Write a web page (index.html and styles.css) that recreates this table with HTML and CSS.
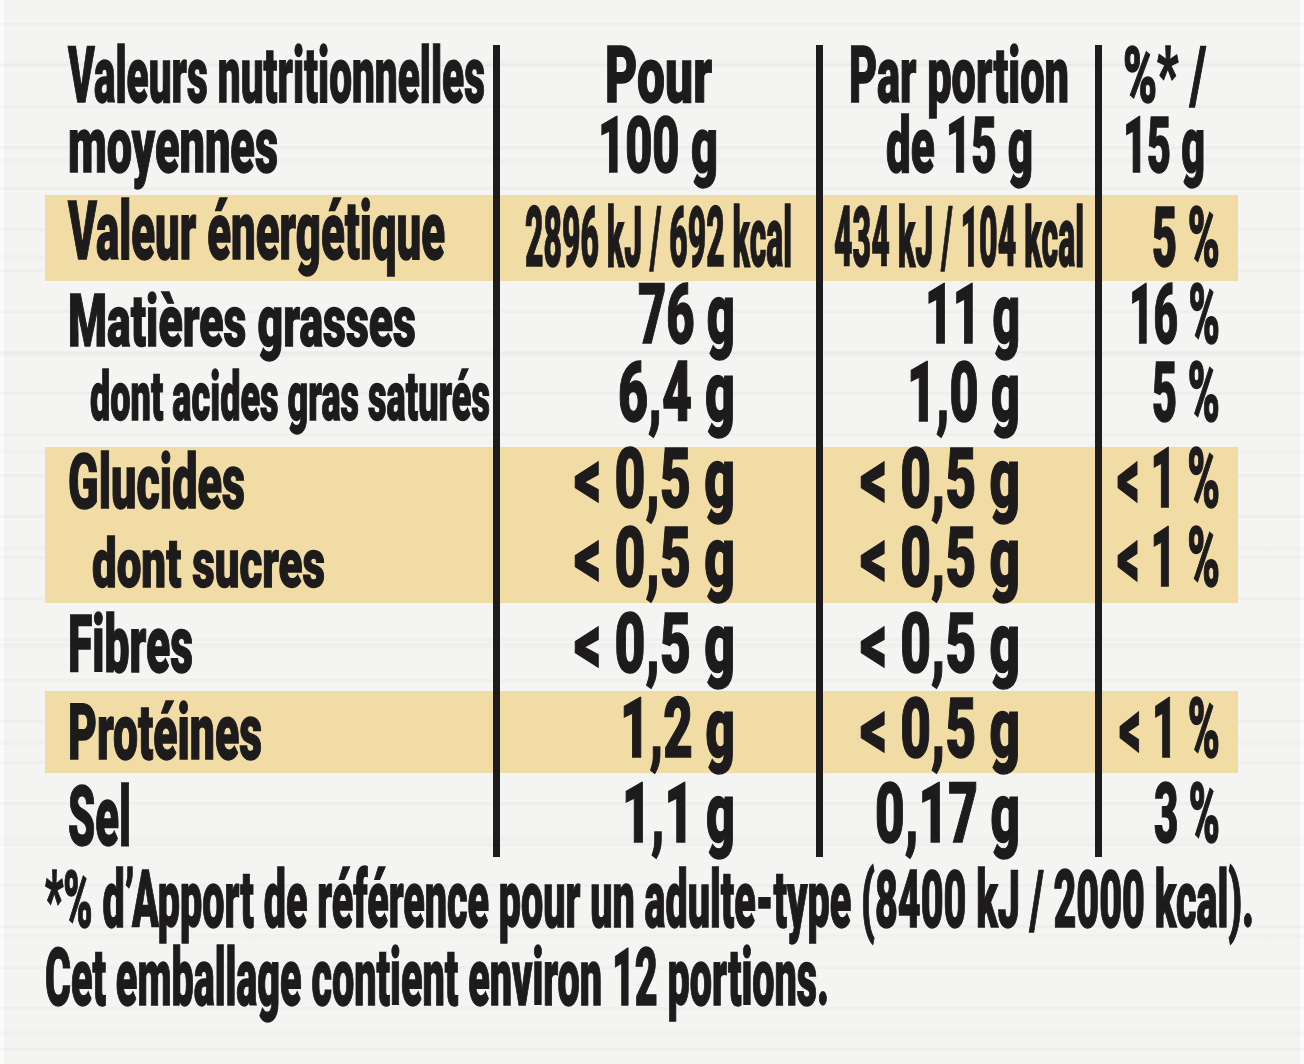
FILE: index.html
```html
<!DOCTYPE html>
<html lang="fr">
<head>
<meta charset="utf-8">
<title>Valeurs nutritionnelles</title>
<link rel="stylesheet" href="styles.css">
</head>
<body>
<div class="sheet">
  <div class="table">
    <div class="row hdr">
      <div class="cell c1 lab"><span class="fit" data-w="417">Valeurs nutritionnelles</span><span class="fit" data-w="210">moyennes</span></div>
      <div class="cell c2 ctr"><span class="fit" data-w="107">Pour</span><span class="fit" data-w="120">100 g</span></div>
      <div class="cell c3 ctr"><span class="fit" data-w="220">Par portion</span><span class="fit" data-w="147">de 15 g</span></div>
      <div class="cell c4 lft"><span class="fit" data-w="83">%* /</span><span class="fit" data-w="82">15 g</span></div>
    </div>
    <div class="row band r-energy">
      <div class="cell c1 lab"><span class="fit" data-w="377">Valeur énergétique</span></div>
      <div class="cell c2 ctr"><span class="fit" data-w="267">2896 kJ / 692 kcal</span></div>
      <div class="cell c3 ctr"><span class="fit" data-w="250">434 kJ / 104 kcal</span></div>
      <div class="cell c4 val"><span class="fit" data-w="68">5 %</span></div>
    </div>
    <div class="row r-fat">
      <div class="cell c1 lab"><span class="fit" data-w="348">Matières grasses</span></div>
      <div class="cell c2 val"><span class="fit" data-w="97">76 g</span></div>
      <div class="cell c3 val"><span class="fit" data-w="95">11 g</span></div>
      <div class="cell c4 val"><span class="fit" data-w="91">16 %</span></div>
    </div>
    <div class="row r-sat">
      <div class="cell c1 lab sub1"><span class="fit" data-w="400">dont acides gras saturés</span></div>
      <div class="cell c2 val"><span class="fit" data-w="117">6,4 g</span></div>
      <div class="cell c3 val"><span class="fit" data-w="113">1,0 g</span></div>
      <div class="cell c4 val"><span class="fit" data-w="68">5 %</span></div>
    </div>
    <div class="row band r-gluc">
      <div class="cell c1 lab"><span class="fit" data-w="177">Glucides</span></div>
      <div class="cell c2 val"><span class="fit" data-w="161">&lt; 0,5 g</span></div>
      <div class="cell c3 val"><span class="fit" data-w="160">&lt; 0,5 g</span></div>
      <div class="cell c4 val"><span class="fit" data-w="103">&lt; 1 %</span></div>
    </div>
    <div class="row band r-sucres">
      <div class="cell c1 lab sub2"><span class="fit" data-w="233">dont sucres</span></div>
      <div class="cell c2 val"><span class="fit" data-w="161">&lt; 0,5 g</span></div>
      <div class="cell c3 val"><span class="fit" data-w="160">&lt; 0,5 g</span></div>
      <div class="cell c4 val"><span class="fit" data-w="103">&lt; 1 %</span></div>
    </div>
    <div class="row r-fibres">
      <div class="cell c1 lab"><span class="fit" data-w="125">Fibres</span></div>
      <div class="cell c2 val"><span class="fit" data-w="161">&lt; 0,5 g</span></div>
      <div class="cell c3 val"><span class="fit" data-w="160">&lt; 0,5 g</span></div>
      <div class="cell c4 val"></div>
    </div>
    <div class="row band r-prot">
      <div class="cell c1 lab"><span class="fit" data-w="194">Protéines</span></div>
      <div class="cell c2 val"><span class="fit" data-w="115">1,2 g</span></div>
      <div class="cell c3 val"><span class="fit" data-w="160">&lt; 0,5 g</span></div>
      <div class="cell c4 val"><span class="fit" data-w="101">&lt; 1 %</span></div>
    </div>
    <div class="row r-sel">
      <div class="cell c1 lab"><span class="fit" data-w="63">Sel</span></div>
      <div class="cell c2 val"><span class="fit" data-w="113">1,1 g</span></div>
      <div class="cell c3 val"><span class="fit" data-w="145">0,17 g</span></div>
      <div class="cell c4 val"><span class="fit" data-w="66">3 %</span></div>
    </div>
  </div>
  <div class="notes">
    <span class="fit" data-w="1209">*% d’Apport de référence pour un adulte-type (8400 kJ / 2000 kcal).</span>
    <span class="fit" data-w="784">Cet emballage contient environ 12 portions.</span>
  </div>
</div>
<script src="script.js"></script>
</body>
</html>
```
FILE: styles.css
```css
html, body {
  margin: 0;
  padding: 0;
  overflow: hidden;
}

body {
  width: 1304px;
  height: 1064px;
  background-color: #f4f4f3;
  background-image:
    repeating-linear-gradient(180deg, rgba(0,0,0,0) 0 23px, rgba(90,90,90,0.035) 23px 26px, rgba(0,0,0,0) 26px 41px),
    repeating-linear-gradient(180deg, rgba(0,0,0,0) 0 61px, rgba(120,120,120,0.03) 61px 66px, rgba(0,0,0,0) 66px 97px),
    linear-gradient(90deg, rgba(255,255,255,0.6) 0 4px, rgba(255,255,255,0) 4px calc(100% - 4px), rgba(255,255,255,0.6) calc(100% - 4px));
  font-family: "Roboto", "Liberation Sans", Arial, sans-serif;
  font-weight: 900;
  color: #1d1b1b;
}

.sheet {
  padding: 45px 0 0 45px;
}

.table {
  width: 1193px;
}

.row {
  display: grid;
  grid-template-columns: 455px 323px 279px 136px;
  --lf: 80px;
  --lp: 0px;
  --vp: 0px;
}

.band {
  background: #f2dca6;
}

.cell {
  box-sizing: border-box;
  display: flex;
  flex-direction: column;
}

.c1, .c2, .c3 {
  border-right: 7px solid #1d1b1b;
}

.fit {
  display: block;
  flex: none;
  white-space: nowrap;
  line-height: 0.8;
  font-size: 83px;
  -webkit-text-stroke: 1.4px #1d1b1b;
  transform-origin: left center;
  transform: scaleX(0.5);
}

.lab { align-items: flex-start; padding-left: 23px; }
.lab .fit { font-size: var(--lf); }
.lab > .fit:first-child { margin-top: var(--lp); }

.sub1 { padding-left: 45px; }
.sub2 { padding-left: 47px; }

.ctr { align-items: center; }
.lft { align-items: flex-start; padding-left: 21px; }

.val { align-items: flex-end; }
.c2.val { padding-right: 81px; }
.c3.val { padding-right: 75px; }
.c4.val { padding-right: 18px; }

.val > .fit:first-child,
.ctr > .fit:first-child { margin-top: var(--vp); }

/* header */
.hdr { height: 150px; }
.hdr .fit {
  font-size: 78px;
  line-height: 70px;
}
.hdr .cell > .fit:first-child { margin-top: -4px; }

/* rows */
.r-energy { height: 86px; --lf: 82px; --lp: 4px; --vp: 10px; }
.r-fat    { height: 81px; --lf: 72px; --lp: 12px; --vp: 1px; }
.r-sat    { height: 85px; --lf: 68px; --lp: 8px;  --vp: -2px; }
.r-gluc   { height: 78px; --lf: 76px; --lp: 5px;  --vp: -1px; }
.r-sucres { height: 78px; --lf: 68px; --lp: 12px; --vp: 0px; }
.r-fibres { height: 88px; --lf: 79px; --lp: 11px; --vp: 8px; }
.r-prot   { height: 82px; --lf: 77px; --lp: 12px; --vp: 5px; }
.r-sel    { height: 84px; --lf: 84px; --lp: 10px; --vp: 8px; }

/* footnotes */
.notes {
  display: flex;
  flex-direction: column;
  align-items: flex-start;
  padding-top: 4px;
}
.notes .fit {
  font-size: 80px;
  line-height: 78px;
}
```
FILE: script.js
```js
(function () {
  function fit() {
    var els = document.querySelectorAll('.fit');
    for (var i = 0; i < els.length; i++) {
      var el = els[i];
      var target = parseFloat(el.getAttribute('data-w'));
      el.style.width = 'auto';
      el.style.transform = 'none';
      var natural = el.getBoundingClientRect().width;
      if (!natural) continue;
      el.style.width = target + 'px';
      el.style.transform = 'scaleX(' + (target / natural).toFixed(4) + ')';
    }
  }
  fit();
  if (document.fonts && document.fonts.ready) {
    document.fonts.ready.then(fit);
  }
  window.addEventListener('load', fit);
})();
```
